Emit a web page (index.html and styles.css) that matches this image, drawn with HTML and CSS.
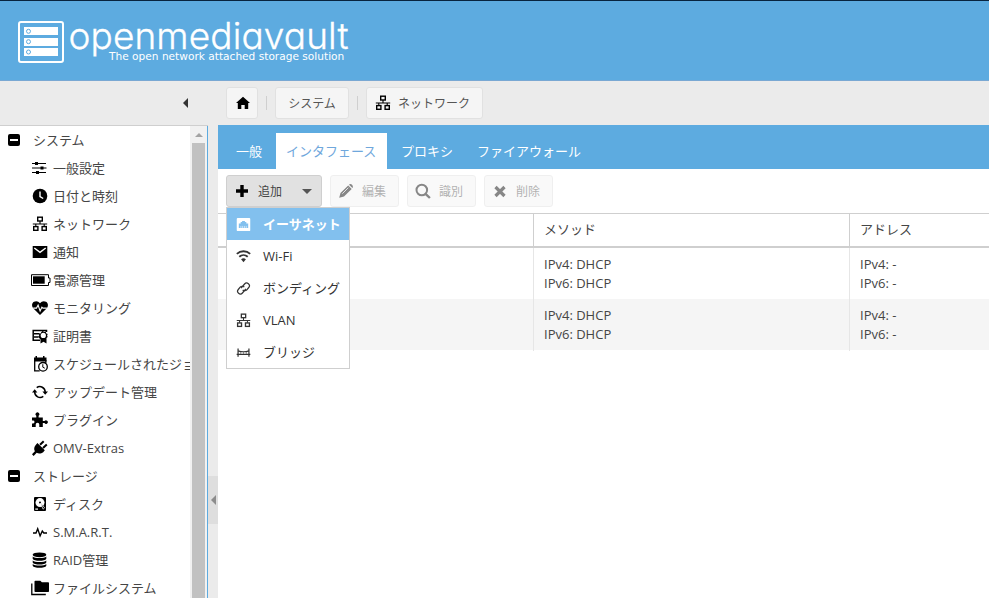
FILE: index.html
```
<!DOCTYPE html>
<html lang="ja">
<head>
<meta charset="utf-8">
<title>openmediavault</title>
<link rel="stylesheet" href="styles.css">
</head>
<body>
<svg class="defs" aria-hidden="true">
  <symbol id="minus" viewBox="0 0 12 12"><rect width="12" height="12" rx="2"/><rect x="2" y="5" width="8" height="2" fill="#fff"/></symbol>
  <symbol id="sliders" viewBox="0 0 16 16"><path d="M0 3h3V2h3v1h8v1H6v1H3V4H0zM0 7.5h8.5v-1h3v1h3v1h-3v1h-3v-1H0zM0 12h4v-1h3v1h7v1H7v1H4v-1H0z"/></symbol>
  <symbol id="clock" viewBox="0 0 16 16"><circle cx="8" cy="8" r="7.3"/><path d="M8 3.5V8.5L11.2 10.5" fill="none" stroke="#fff" stroke-width="1.4"/></symbol>
  <symbol id="network" viewBox="0 0 16 16"><g fill="none" stroke="currentColor" stroke-width="1.4"><rect x="5.7" y="1.2" width="4.6" height="3.8"/><rect x="1.7" y="10.6" width="4.2" height="3.7"/><rect x="10.1" y="10.6" width="4.2" height="3.7"/><path d="M8 5v3M3.8 10.5V8h8.4v2.5M.8 8h14.4" stroke-width="1.1"/></g></symbol>
  <symbol id="mail" viewBox="0 0 16 16"><path d="M.7 2h14.6v12H.7z"/><path d="M2.3 4 8 8.3 13.7 4" fill="none" stroke="#fff" stroke-width="1.4"/></symbol>
  <symbol id="battery" viewBox="0 0 20 16"><path d="M.5 2.7h17V6H19v4.5h-1.5v3H.5z" fill="none" stroke="currentColor"/><path d="M2 4.3h11.7v7.4H2z"/></symbol>
  <symbol id="heart" viewBox="0 0 16 16"><path d="M8 15 1.2 8.2C-.6 6-.2 3 2 1.8 4 .7 6.5 1.2 8 3.3 9.5 1.2 12 .7 14 1.8c2.2 1.2 2.6 4.2.8 6.4z"/><path d="M1.2 8.1h3.3l1.6-3 2 6 1.8-4 1 1h4" fill="none" stroke="#fff" stroke-width="1.1"/></symbol>
  <symbol id="cert" viewBox="0 0 16 16"><path d="M8 12.2H1.2V2.4h13.3V4M2 5.8h5.5M2 9h4.5" fill="none" stroke="currentColor" stroke-width="1.5"/><path d="m10.8 2.8 1.2 1.1 1.8-.4.3 1.7 1.6.7-.6 1.6.6 1.5-1.2 1v5.5l-3-1.8-3 1.8v-4l-1.3-1.4-1-1.3 1-1.3-.3-1.7 1.7-.4.6-1.2z"/><circle cx="11.3" cy="7.4" r="2.6" fill="#fff"/></symbol>
  <symbol id="calendar" viewBox="0 0 16 16"><path d="M2 1.5h1.5V0H5v1.5h6V0h1.5v1.5h2V5.5H2z"/><path d="M2.7 4v10.8h5M13.8 4v3" fill="none" stroke="currentColor" stroke-width="1.3"/><circle cx="11" cy="10.8" r="4.3" fill="#fff" stroke="currentColor" stroke-width="1.3"/><path d="M10.8 8.2v3l2 1" fill="none" stroke="currentColor"/></symbol>
  <symbol id="refresh" viewBox="0 0 16 16"><path d="M4.7 3.6A5.4 5.4 0 0 1 13.2 8M2.7 8a5.4 5.4 0 0 0 8.6 4.4" fill="none" stroke="currentColor" stroke-width="1.5"/><path d="m13.2 10.8-2.8-3.4H16zM2.7 5.2 0 8.6h5.4z"/></symbol>
  <symbol id="puzzle" viewBox="0 0 16 16"><path d="M0 5.5h4.3V3.8a1.9 1.9 0 1 1 2.3 0v1.7h4.2v3.6h1.7a1.8 1.8 0 1 1 0 2h-1.7V15H7.3v-2.4a1.8 1.8 0 0 0-3.6 0V15H0v-3.6h1.1a1.4 1.4 0 0 0 0-2.8H0z"/></symbol>
  <symbol id="plug" viewBox="0 0 16 16"><path d="m5.4 3 7.4 7.3-1.6 1.9c-2 1.6-4.7 1.8-6.5.6L1.6 15.9 0 14.3 2.9 11.2C1.7 9.2 2.1 6.7 3.7 5z"/><path d="m8 4.8 3.7-3.6M11 8l3.8-3.6" stroke="currentColor" stroke-width="2"/></symbol>
  <symbol id="disk" viewBox="0 0 16 16"><rect x="2" y="1" width="12" height="14" rx="1"/><circle cx="8" cy="6.6" r="4.5" fill="#fff"/><circle cx="8" cy="6.4" r="1"/><path d="m8.8 7 3.8 4.8-1.6 1.4z" stroke="#fff" stroke-width=".7"/><path d="M3.3 12.5H6v1.2H3.3z" fill="#fff"/></symbol>
  <symbol id="pulse" viewBox="0 0 16 16"><path d="M1 9h3l1.7-4.3 2.4 7.2L10.3 7l1.5 2H15" fill="none" stroke="currentColor" stroke-width="1.4"/></symbol>
  <symbol id="database" viewBox="0 0 16 16"><ellipse cx="7.5" cy="2.8" rx="6.8" ry="2.4"/><path d="M.7 4.5c2 2 11.6 2 13.6 0v2.3c-1 2.7-12.6 2.7-13.6 0zM.7 8.4c2 2 11.6 2 13.6 0v2.1c-1 2.7-12.6 2.7-13.6 0zM.7 12c2 2 11.6 2 13.6 0v1.7c-1 2.7-12.6 2.7-13.6 0z"/></symbol>
  <symbol id="folder" viewBox="0 0 20 16"><path d="M3.5 1.5q0-.8.8-.8h5l1.6 1.6h6.3q.8 0 .8.8v8.1q0 .8-.8.8H4.3q-.8 0-.8-.8z"/><path d="M.8 3.4v11.1h14" fill="none" stroke="currentColor" stroke-width="1.3"/></symbol>
  <symbol id="home" viewBox="0 0 16 16"><path d="m8 1.8 7 6.3h-1.8V14H9.7v-4H6.3v4H2.8V8.1H1z"/></symbol>
  <symbol id="plus" viewBox="0 0 16 16"><path d="M6.3 2h3.4v4.3H14v3.4H9.7V14H6.3V9.7H2V6.3h4.3z"/></symbol>
  <symbol id="pencil" viewBox="0 0 16 16"><path d="M1.2 14.8 2.5 10l7.7-7.6 3.5 3.5L6 13.5zM11 1.7c1.8-1.9 5.2 1.3 3.4 3.4z"/><path d="m4.3 10.7 6-6" stroke="#fafafa" stroke-width=".8"/></symbol>
  <symbol id="search" viewBox="0 0 16 16"><circle cx="6.8" cy="7" r="5.3" fill="none" stroke="currentColor" stroke-width="2"/><path d="m10.5 10.8 4.4 4.2" stroke="currentColor" stroke-width="2.4"/></symbol>
  <symbol id="cross" viewBox="0 0 16 16"><path d="m3.5 4 9 9m0-9-9 9" stroke="currentColor" stroke-width="3.2"/></symbol>
  <symbol id="ethernet" viewBox="0 0 16 16"><rect x=".8" y="1" width="14.4" height="14" rx="1"/><path d="M3 11.7V6.8h2V5.2h1.5v-1h3v1H11v1.6h2v4.9z" fill="#82c0ee"/><path d="M5.2 9.5v2.3M7.1 9.5v2.3M9 9.5v2.3M10.9 9.5v2.3" stroke="#fff" stroke-width=".6"/></symbol>
  <symbol id="wifi" viewBox="0 0 16 16"><path d="M.9 5.2a10.4 10.4 0 0 1 14.2 0M3.5 8.3a6.7 6.7 0 0 1 9 0" fill="none" stroke="currentColor" stroke-width="2"/><path d="M5.4 10.9q2.6-2 5.2 0L8 14z"/></symbol>
  <symbol id="link" viewBox="0 0 16 16"><g transform="rotate(-50 8 8)" fill="none" stroke="currentColor" stroke-width="1.3"><path d="M9.4 10.2H3.6a2.9 2.9 0 0 1 0-5.8h3.2a2.9 2.9 0 0 1 2.8 3.4"/><path d="M6.6 5.8h5.8a2.9 2.9 0 0 1 0 5.8H9.2a2.9 2.9 0 0 1-2.8-3.4"/></g></symbol>
  <symbol id="bridge" viewBox="0 0 16 16"><path d="M2.2 3.6v8.8M13.8 3.6v8.8M.7 10h14.6M2.2 6.2q5.8 2 11.6 0" fill="none" stroke="currentColor" stroke-width="1.3"/><path d="M5 7.2V10M8 7.4V10M11 7.2V10" stroke="currentColor" stroke-width=".5"/></symbol>
</svg>

<header class="header">
  <svg class="mark" width="46" height="42" viewBox="0 0 46 42"><rect x="1" y="1" width="44" height="40" rx="2" fill="none" stroke="#fff" stroke-width="2"/><path d="M6 6h34v8H6zM6 17h34v8H6zM6 27h34v8H6z" fill="#fff"/><g fill="#fff" stroke="#5dabe0" stroke-width="1"><circle cx="10.5" cy="10.3" r="2"/><circle cx="10.5" cy="20.7" r="2"/><circle cx="10.5" cy="31" r="2"/></g></svg>
  <div class="brand">
    <svg class="wordmark" width="282" height="40"><text x="-1.5" y="28" textLength="280" lengthAdjust="spacing">openmediavault</text></svg>
    <div class="slogan">The open network attached storage solution</div>
  </div>
</header>

<div class="body">
  <aside class="side">
    <div class="side-head"><i class="tri-left"></i></div>
    <div class="side-body">
      <ul class="tree">
        <li class="root"><svg><use href="#minus"/></svg>システム</li>
        <li><svg><use href="#sliders"/></svg>一般設定</li>
        <li><svg><use href="#clock"/></svg>日付と時刻</li>
        <li><svg><use href="#network"/></svg>ネットワーク</li>
        <li><svg><use href="#mail"/></svg>通知</li>
        <li class="wide"><svg><use href="#battery"/></svg>電源管理</li>
        <li><svg><use href="#heart"/></svg>モニタリング</li>
        <li><svg><use href="#cert"/></svg>証明書</li>
        <li><svg><use href="#calendar"/></svg>スケジュールされたジョブ</li>
        <li><svg><use href="#refresh"/></svg>アップデート管理</li>
        <li><svg><use href="#puzzle"/></svg>プラグイン</li>
        <li><svg><use href="#plug"/></svg>OMV-Extras</li>
        <li class="root"><svg><use href="#minus"/></svg>ストレージ</li>
        <li><svg><use href="#disk"/></svg>ディスク</li>
        <li><svg><use href="#pulse"/></svg>S.M.A.R.T.</li>
        <li><svg><use href="#database"/></svg>RAID管理</li>
        <li class="wide"><svg><use href="#folder"/></svg>ファイルシステム</li>
      </ul>
      <div class="scrollbar"><div class="scroll-up"><i></i></div><div class="thumb"></div></div>
    </div>
  </aside>
  <div class="splitter"><div class="grip"><i class="tri-left"></i></div></div>
  <main class="main">
    <nav class="crumbs">
      <a class="crumb home"><svg><use href="#home"/></svg></a>
      <i class="sep"></i>
      <a class="crumb plain">システム</a>
      <i class="sep"></i>
      <a class="crumb net"><svg><use href="#network"/></svg>ネットワーク</a>
    </nav>
    <div class="tabs"><a>一般</a><a class="active">インタフェース</a><a>プロキシ</a><a>ファイアウォール</a></div>
    <div class="toolbar">
      <div class="add-wrap">
        <a class="btn add"><svg><use href="#plus"/></svg>追加<i class="caret"></i></a>
        <ul class="menu">
          <li class="on"><svg><use href="#ethernet"/></svg>イーサネット</li>
          <li><svg><use href="#wifi"/></svg>Wi-Fi</li>
          <li><svg><use href="#link"/></svg>ボンディング</li>
          <li><svg><use href="#network"/></svg>VLAN</li>
          <li><svg><use href="#bridge"/></svg>ブリッジ</li>
        </ul>
      </div>
      <a class="btn off"><svg><use href="#pencil"/></svg>編集</a>
      <a class="btn off"><svg><use href="#search"/></svg>識別</a>
      <a class="btn off"><svg><use href="#cross"/></svg>削除</a>
    </div>
    <div class="grid">
      <div class="row head"><div></div><div>メソッド</div><div>アドレス</div></div>
      <div class="row"><div></div><div>IPv4: DHCP<br>IPv6: DHCP</div><div>IPv4: -<br>IPv6: -</div></div>
      <div class="row alt"><div></div><div>IPv4: DHCP<br>IPv6: DHCP</div><div>IPv4: -<br>IPv6: -</div></div>
    </div>
  </main>
</div>
</body>
</html>
```
FILE: styles.css
```
* { box-sizing: border-box; }
body {
  margin: 0;
  height: 598px;
  overflow: hidden;
  background: #ebebeb;
  color: #454545;
  font: 13px/19px "Open Sans", "Noto Sans CJK JP", sans-serif;
}
ul { list-style: none; margin: 0; padding: 0; }
svg { flex: none; fill: currentColor; }
.defs { display: none; }

.header {
  height: 81px;
  background: #5dabe0;
  border-top: 1px solid #08243f;
  border-bottom: 1px solid #79a8d3;
  display: flex;
  padding: 20px 0 0 18px;
}
.brand { padding-left: 6px; height: 42px; }
.wordmark { display: block; height: 28px; overflow: visible; }
.wordmark text {
  font: 300 37px Inter, "Open Sans", sans-serif;
  font-feature-settings: "cv11";
  fill: #fff;
  stroke: #fff;
  stroke-width: .3px;
}
.slogan {
  margin-left: 39px;
  color: #fff;
  font: 10.6px/14px "DejaVu Sans", sans-serif;
  white-space: nowrap;
}

.body { display: flex; height: 517px; }
.side { width: 208px; display: flex; flex-direction: column; }
.side-head {
  height: 45px;
  border-bottom: 1px solid #cfcfcf;
  display: flex;
  align-items: center;
  padding-left: 183px;
}
.tri-left { border: 5px solid transparent; border-right-color: #333; border-left: 0; }
.side-body {
  flex: 1;
  min-height: 0;
  display: flex;
  background: #fff;
  border-right: 1px solid #5dabe0;
}
.tree { width: 190px; overflow: hidden; }
.tree li {
  height: 28px;
  display: flex;
  align-items: center;
  padding-left: 32px;
  white-space: nowrap;
}
.tree svg { width: 16px; height: 16px; margin-right: 5px; color: #000; }
.tree .root { padding-left: 8px; }
.tree .root svg { width: 12px; height: 12px; margin-right: 13px; }
.tree .wide { padding-left: 31px; }
.tree .wide svg { width: 20px; margin-right: 2px; }
.scrollbar { width: 17px; background: #f1f1f1; padding: 0 2px; display: flex; flex-direction: column; }
.scroll-up { height: 17px; display: flex; align-items: center; justify-content: center; }
.scroll-up i { border: 4px solid transparent; border-top: 0; border-bottom-color: #a3a3a3; }
.thumb { flex: 1; background: #c1c1c1; }

.splitter { width: 10px; display: flex; padding-top: 395px; }
.grip { width: 10px; height: 48px; background: #dedede; display: flex; align-items: center; padding-left: 3px; }
.grip .tri-left { border-right-color: #8c8c8c; }

.main { flex: 1; min-width: 0; display: flex; flex-direction: column; }
.crumbs { height: 44px; display: flex; align-items: center; padding-left: 8px; }
.crumb {
  height: 32px;
  border: 1px solid #e1e1e1;
  border-radius: 3px;
  background: #f5f5f5;
  color: #555;
  display: flex;
  align-items: center;
  font-size: 12px;
}
.crumb svg { width: 16px; height: 16px; color: #000; }
.home { width: 32px; padding-left: 8px; }
.plain { width: 74px; justify-content: center; }
.net { width: 117px; padding-left: 8px; }
.net svg { margin-right: 7px; }
.sep { width: 1px; height: 14px; margin: 0 8px; background: #cfcfcf; }

.tabs { height: 44px; background: #5dabe0; display: flex; align-items: flex-end; gap: 4px; padding-left: 8px; }
.tabs a { height: 36px; line-height: 36px; padding: 0 10px; color: #fff; }
.tabs .active { width: 111px; background: #fff; color: #6fa7dc; }

.toolbar { height: 44px; background: #fff; display: flex; gap: 8px; padding: 6px 8px; }
.btn {
  width: 69px;
  height: 32px;
  border: 1px solid #e1e1e1;
  border-radius: 3px;
  background: #f5f5f5;
  display: flex;
  align-items: center;
  padding-left: 7px;
  font-size: 12px;
}
.btn svg { width: 16px; height: 16px; margin-right: 8px; }
.off { opacity: .5; color: #666; }
.off svg { color: #111; }
.add { width: 96px; background: #e1e1e1; border-color: #cfcfcf; }
.add svg { color: #000; }
.caret { border: 5px solid transparent; border-top-color: #555; border-bottom: 0; margin-left: 20px; }
.add-wrap { position: relative; }
.menu {
  position: absolute;
  top: 32px;
  left: 0;
  z-index: 2;
  width: 124px;
  background: #fff;
  border: 1px solid #cfcfcf;
  color: #333;
}
.menu li { height: 32px; display: flex; align-items: center; padding-left: 9px; }
.menu svg { width: 15px; height: 15px; margin-right: 12px; }
.menu .on { background: #82c0ee; color: #fff; font-weight: 700; }

.grid { flex: 1; background: #fff; border-top: 1px solid #cfcfcf; }
.row { display: grid; grid-template-columns: 316px 316px 1fr; height: 51px; }
.row > div { border-right: 1px solid #e6e6e6; padding: 7px 10px; }
.row > div:last-child { border-right: 0; }
.head { height: 34px; border-bottom: 2px solid #cfcfcf; }
.head > div { border-color: #cfcfcf; padding-top: 6px; }
.alt { background: #f5f5f5; }
```
